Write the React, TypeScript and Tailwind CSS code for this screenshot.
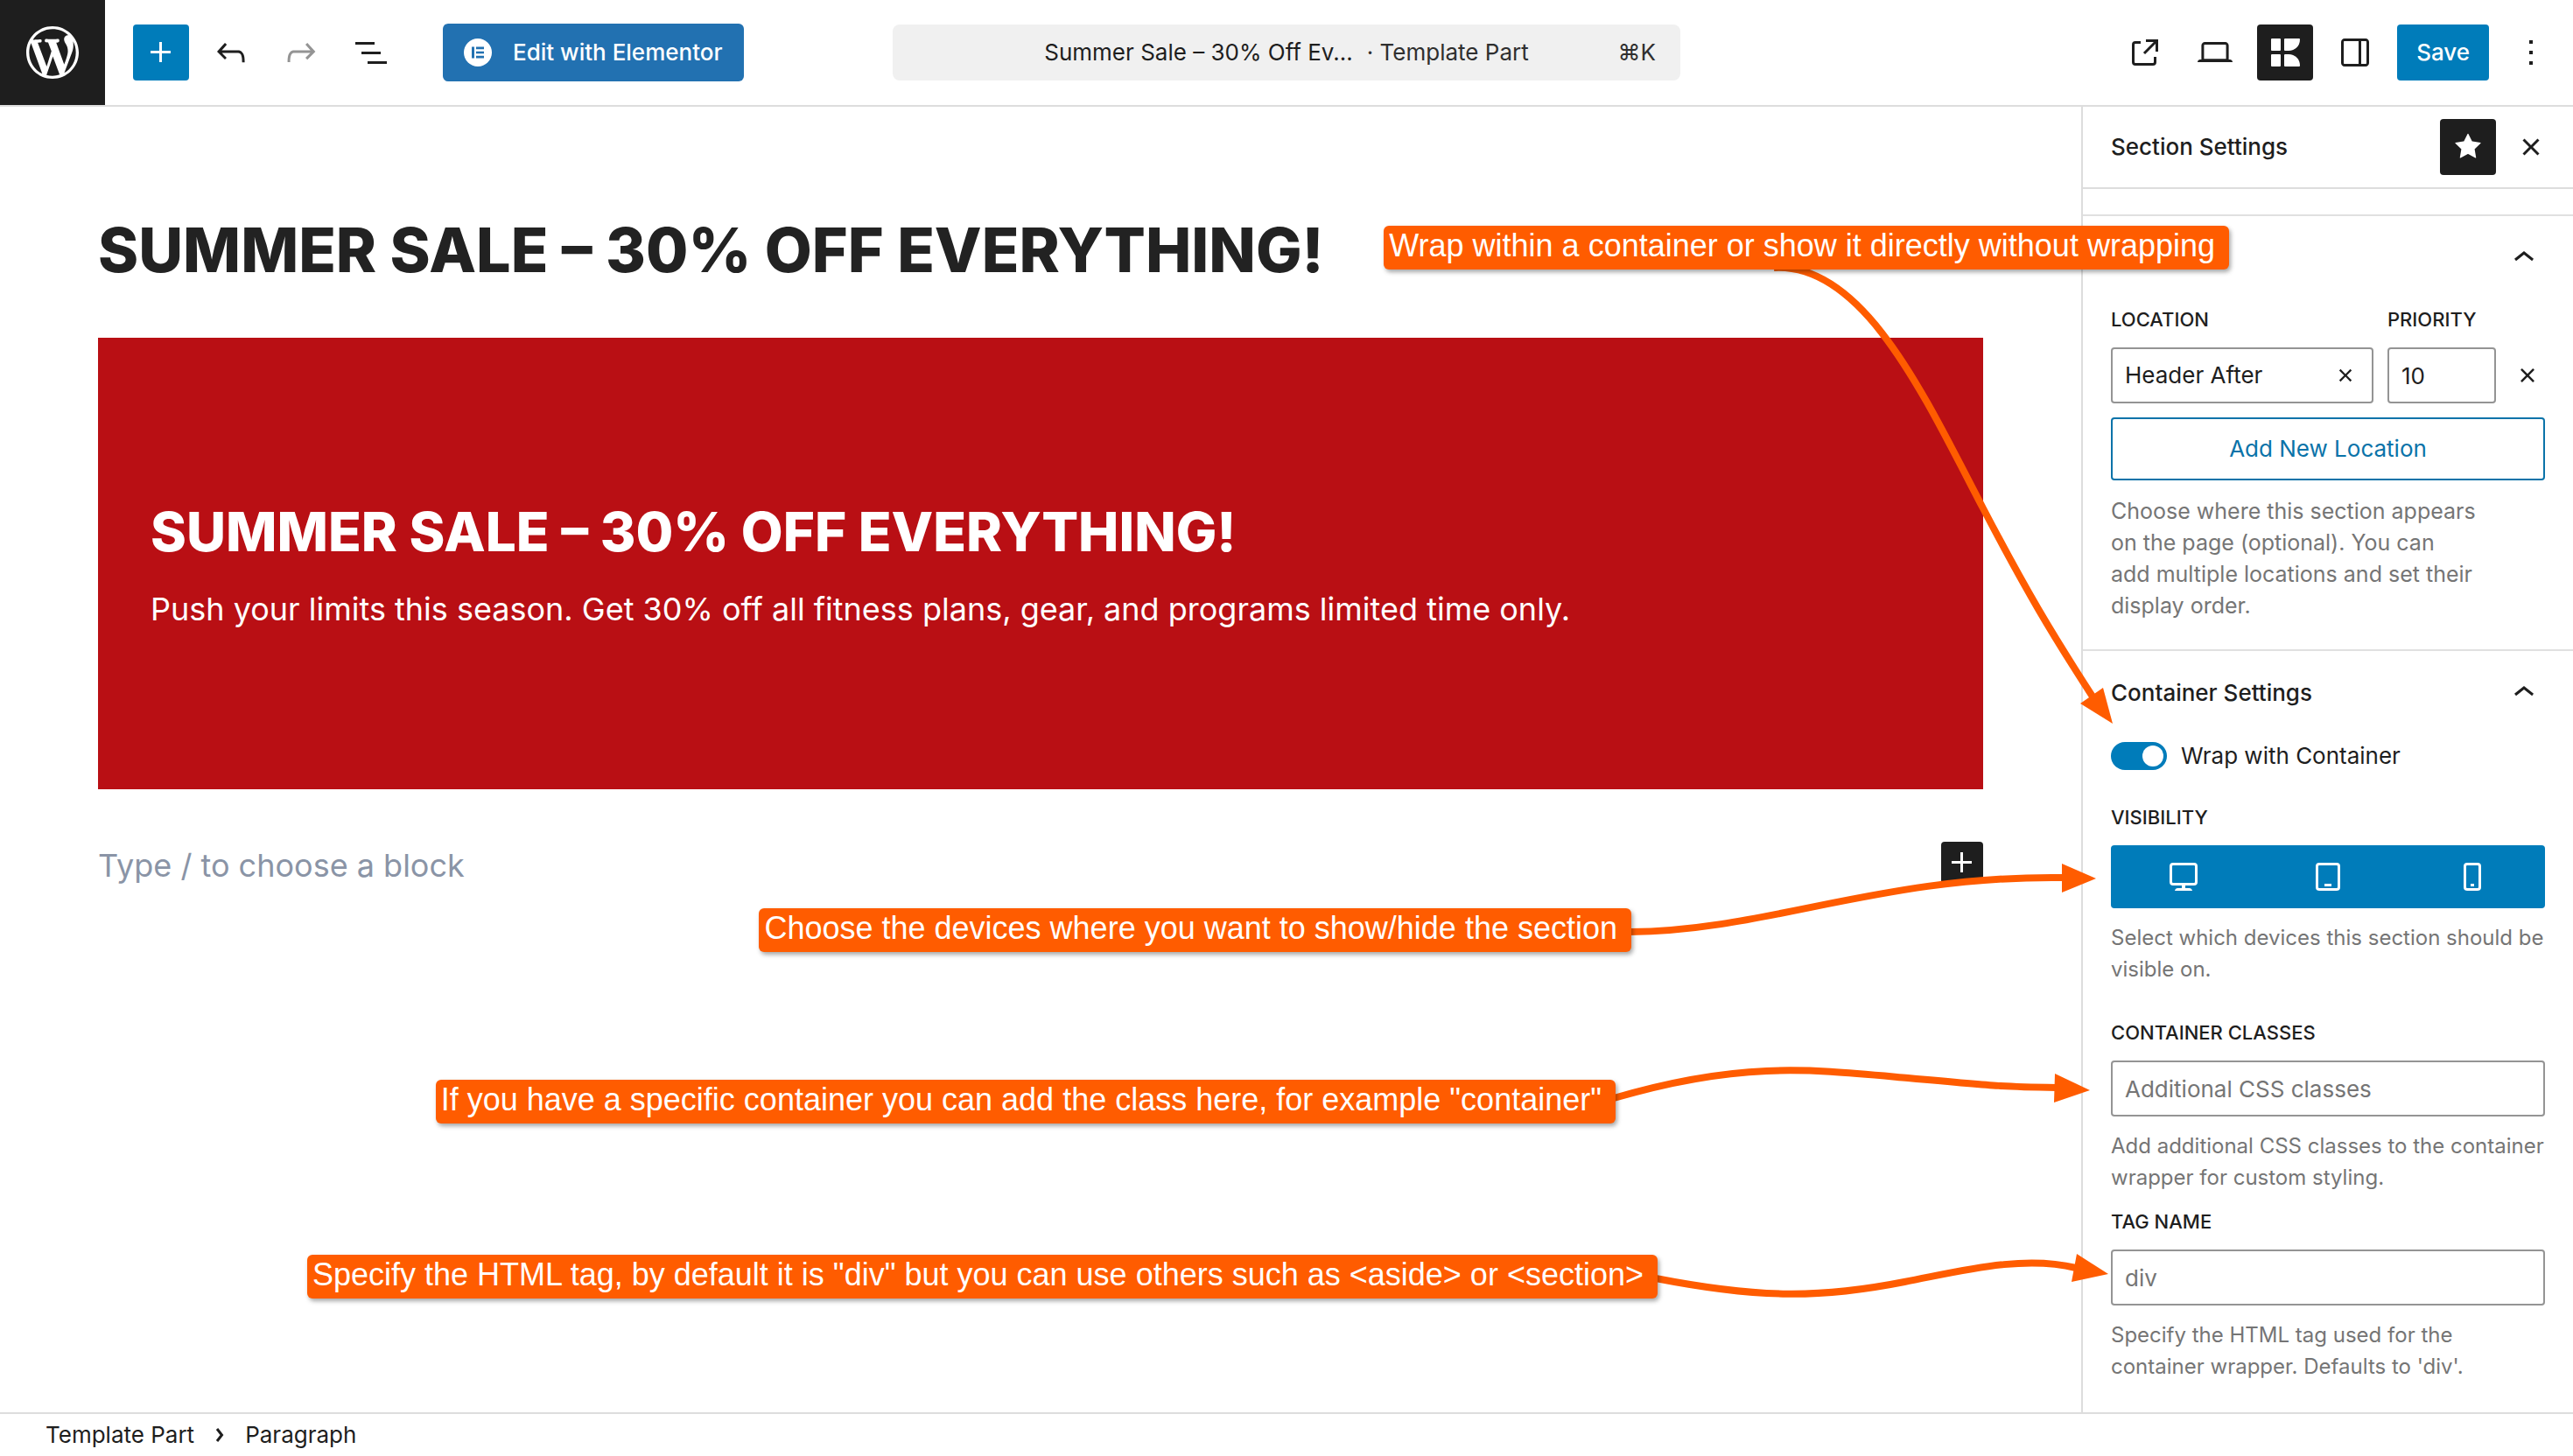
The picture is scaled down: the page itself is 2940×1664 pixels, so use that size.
import type { ReactNode } from "react";

const ICONS = {
  plus: "M11 12.5V17.5H12.5V12.5H17.5V11H12.5V6H11V11H6V12.5H11Z",
  undo: "M18.3 11.7c-.6-.6-1.4-.9-2.3-.9H6.7l2.9-3.3-1.1-1-4.5 5L8.5 16l1-1-2.7-2.7H16c.5 0 .9.2 1.3.5 1 1 1 3.4 1 4.5v.3h1.5v-.2c0-1.5 0-4.3-1.5-5.7z",
  redo: "M15.6 6.5l-1.1 1 2.9 3.3H8c-.9 0-1.7.3-2.3.9-1.4 1.5-1.4 4.2-1.4 5.6v.2h1.5v-.3c0-1.1 0-3.5 1-4.5.3-.3.7-.5 1.3-.5h9.2L14.5 15l1.1 1.1 4.6-4.6-4.6-5z",
  list: "M3 6h11v1.5H3V6Zm3.5 5.5h11V13h-11v-1.5ZM21 17H10v1.5h11V17Z",
  external:
    "M19.5 4.5h-7V6h4.44l-5.97 5.97 1.06 1.06L18 7.06v4.44h1.5v-7Zm-13 1a2 2 0 0 0-2 2v10a2 2 0 0 0 2 2h10a2 2 0 0 0 2-2v-3H17v3a.5.5 0 0 1-.5.5h-10a.5.5 0 0 1-.5-.5v-10a.5.5 0 0 1 .5-.5h3V5.5h-3Z",
  laptop:
    "M20.5 16h-.7V8c0-1.1-.9-2-2-2H6.2c-1.1 0-2 .9-2 2v8h-.7c-.8 0-1.5.7-1.5 1.5h20c0-.8-.7-1.5-1.5-1.5zM5.7 8c0-.3.2-.5.5-.5h11.6c.3 0 .5.2.5.5v7.6H5.7V8z",
  drawer:
    "M18 4H6c-1.1 0-2 .9-2 2v12c0 1.1.9 2 2 2h12c1.1 0 2-.9 2-2V6c0-1.1-.9-2-2-2zm-4 14.5H6c-.3 0-.5-.2-.5-.5V6c0-.3.2-.5.5-.5h8v13zm4.5-.5c0 .3-.2.5-.5.5h-2.5v-13H18c.3 0 .5.2.5.5v12z",
  more: "M13 19h-2v-2h2v2zm0-6h-2v-2h2v2zm0-6h-2V5h2v2z",
  close:
    "M12 13.06l3.712 3.713 1.061-1.06L13.061 12l3.712-3.712-1.06-1.06L12 10.938 8.288 7.227l-1.061 1.06L10.939 12l-3.712 3.712 1.06 1.061L12 13.061z",
  chevronUp: "M6.5 12.4L12 8l5.5 4.4-.9 1.2L12 10l-4.5 3.6-1-1.2z",
  star: "M11.776 4.454a.25.25 0 01.448 0l2.069 4.192a.25.25 0 00.188.137l4.626.672a.25.25 0 01.139.426l-3.348 3.263a.25.25 0 00-.072.222l.79 4.607a.25.25 0 01-.362.263l-4.138-2.175a.25.25 0 00-.232 0l-4.138 2.175a.25.25 0 01-.363-.263l.79-4.607a.25.25 0 00-.071-.222L4.754 9.881a.25.25 0 01.139-.426l4.626-.672a.25.25 0 00.188-.137l2.069-4.192z",
  wordpress:
    "M20 10c0-5.51-4.49-10-10-10C4.48 0 0 4.49 0 10c0 5.52 4.48 10 10 10 5.51 0 10-4.48 10-10zM7.78 15.37L4.37 6.22c.55-.02 1.17-.08 1.17-.08.5-.06.44-1.13-.06-1.11 0 0-1.45.11-2.37.11-.18 0-.37 0-.58-.01C4.12 2.69 6.87 1.11 10 1.11c2.33 0 4.45.87 6.05 2.34-.68-.11-1.65.39-1.65 1.58 0 .74.45 1.36.9 2.1.35.61.55 1.36.55 2.46 0 1.49-1.4 5-1.4 5l-3.03-8.37c.54-.02.82-.17.82-.17.5-.05.44-1.25-.06-1.22 0 0-1.44.12-2.38.12-.87 0-2.33-.12-2.33-.12-.5-.03-.56 1.2-.06 1.22l.92.08 1.26 3.41zM17.41 10c.24-.64.74-1.87.43-4.25.7 1.29 1.05 2.71 1.05 4.25 0 3.29-1.73 6.24-4.4 7.78.97-2.59 1.94-5.2 2.92-7.78zM6.1 18.09C3.12 16.65 1.11 13.53 1.11 10c0-1.3.23-2.48.72-3.59C3.25 10.3 4.67 14.2 6.1 18.09zm4.03-6.63l2.58 6.98c-.86.29-1.76.45-2.71.45-.79 0-1.57-.11-2.29-.33.81-2.38 1.62-4.74 2.42-7.1z",
};

function Icon({ d, className = "size-12" }: { d: string; className?: string }) {
  return (
    <svg viewBox="0 0 24 24" fill="currentColor" aria-hidden="true" className={className}>
      <path d={d} />
    </svg>
  );
}

function IconButton({ label, className = "", children }: { label: string; className?: string; children: ReactNode }) {
  return (
    <button
      type="button"
      aria-label={label}
      className={"flex size-16 shrink-0 items-center justify-center rounded-sm " + className}
    >
      {children}
    </button>
  );
}

function TopBar() {
  return (
    <header className="grid h-[122px] grid-cols-[1fr_900px_1fr] items-center border-b-2 border-[#dddddd]">
      <div className="flex items-center">
        <a href="#" aria-label="View site" className="flex size-[120px] items-center justify-center bg-[#1e1e1e] text-white">
          <svg viewBox="-2 -2 24 24" fill="currentColor" aria-hidden="true" className="size-[72px]">
            <path d={ICONS.wordpress} />
          </svg>
        </a>
        <div className="ml-8 flex items-center gap-4">
          <IconButton label="Block inserter" className="bg-[#007cba] text-white">
            <Icon d={ICONS.plus} />
          </IconButton>
          <IconButton label="Undo">
            <Icon d={ICONS.undo} />
          </IconButton>
          <IconButton label="Redo" className="text-[#949494]">
            <Icon d={ICONS.redo} />
          </IconButton>
          <IconButton label="Document overview">
            <Icon d={ICONS.list} />
          </IconButton>
        </div>
        <button
          type="button"
          className="ml-[50px] flex h-[66px] items-center gap-6 rounded-md bg-[#2271b1] px-6 font-medium whitespace-nowrap text-white"
        >
          <svg viewBox="0 0 32 32" aria-hidden="true" className="size-8">
            <circle cx="16" cy="16" r="16" fill="#fff" />
            <path fill="#2271b1" d="M9 9.500h3v13H9zM14 9.500h9v2.700h-9zM14 14.650h9v2.700h-9zM14 19.800h9v2.700h-9z" />
          </svg>
          Edit with Elementor
        </button>
      </div>

      <button type="button" className="flex h-16 items-center rounded-lg bg-[#f0f0f0] px-7">
        <span className="flex-1" />
        <span className="flex gap-4 whitespace-nowrap">
          <span>Summer Sale – 30% Off Ev...</span>
          <span className="text-[#2f2f2f]">· Template Part</span>
        </span>
        <span className="flex-1 text-right text-[#2f2f2f]">⌘K</span>
      </button>

      <div className="flex items-center justify-end gap-4 pr-4">
        <IconButton label="View">
          <Icon d={ICONS.external} />
        </IconButton>
        <IconButton label="Preview">
          <Icon d={ICONS.laptop} />
        </IconButton>
        <IconButton label="Section settings" className="bg-[#1e1e1e] text-white">
          <svg viewBox="0 0 33 32" fill="currentColor" aria-hidden="true" className="h-8 w-[33px]">
            <rect width="11" height="14" rx="1" />
            <rect y="18" width="11" height="14" rx="1" />
            <path d="M16 0H32a1 1 0 0 1 1 1C33 8.500 27.500 14 20 14H16a1 1 0 0 1-1-1V1a1 1 0 0 1 1-1Z" />
            <path d="M16 18H20C27.500 18 33 23.500 33 31a1 1 0 0 1-1 1H16a1 1 0 0 1-1-1V19a1 1 0 0 1 1-1Z" />
          </svg>
        </IconButton>
        <IconButton label="Settings">
          <Icon d={ICONS.drawer} />
        </IconButton>
        <button type="button" className="h-16 rounded-sm bg-[#007cba] px-[22px] font-medium text-white">
          Save
        </button>
        <IconButton label="Options">
          <Icon d={ICONS.more} />
        </IconButton>
      </div>
    </header>
  );
}

function Canvas() {
  return (
    <main className="min-w-0 flex-1 px-28 pt-[124px]">
      <h1 className="text-[70px] leading-[80px] font-extrabold text-[#222222]">SUMMER SALE – 30% OFF EVERYTHING!</h1>
      <section className="mt-[60px] bg-[#b90f14] px-[60px] py-[182px] text-white">
        <h2 className="text-[62px] leading-[80px] font-extrabold">SUMMER SALE – 30% OFF EVERYTHING!</h2>
        <p className="mt-6 text-4xl leading-[48px]">
          Push your limits this season. Get 30% off all fitness plans, gear, and programs limited time only.
        </p>
      </section>
      <div className="mt-[60px] flex items-start justify-between">
        <p className="text-4xl leading-[54px] text-[#8a94a6]">Type / to choose a block</p>
        <button
          type="button"
          aria-label="Add block"
          className="flex size-12 items-center justify-center rounded-sm bg-[#1e1e1e] text-white"
        >
          <Icon d={ICONS.plus} />
        </button>
      </div>
    </main>
  );
}

const LABEL = "block text-[22px] leading-7 font-medium uppercase";
const FIELD = "h-16 w-full rounded-sm border-2 border-[#949494] bg-white px-[14px] placeholder:text-[#757575]";
const HELP = "mt-4 text-2xl leading-9 text-[#757575]";

function PanelToggle({ title, hidden = false }: { title: string; hidden?: boolean }) {
  return (
    <button
      type="button"
      aria-expanded="true"
      aria-label={title}
      className="flex h-24 w-full items-center justify-between text-left font-medium"
    >
      <span>{hidden ? "" : title}</span>
      <Icon d={ICONS.chevronUp} />
    </button>
  );
}

function DeviceButton({ label, children }: { label: string; children: ReactNode }) {
  return (
    <button type="button" aria-label={label} aria-pressed="true" className="flex h-full items-center justify-center">
      <svg viewBox="0 0 32 32" aria-hidden="true" className="size-8" fill="none" stroke="currentColor" strokeWidth="3">
        {children}
      </svg>
    </button>
  );
}

function Sidebar() {
  return (
    <aside className="w-[562px] shrink-0 border-l-2 border-[#dddddd]">
      <div className="flex h-[94px] items-center gap-2 border-b-2 border-[#dddddd] pr-4 pl-8">
        <h2 className="flex-1 font-medium">Section Settings</h2>
        <IconButton label="Pin to toolbar" className="bg-[#1e1e1e] text-white">
          <Icon d={ICONS.star} />
        </IconButton>
        <IconButton label="Close settings">
          <Icon d={ICONS.close} />
        </IconButton>
      </div>

      <section className="mt-[29px] border-t-2 border-[#e0e0e0] px-8 pb-8">
        <PanelToggle title="Location" hidden />
        <div className="mt-2 flex items-end gap-4">
          <div className="flex-1">
            <label htmlFor="location" className={LABEL}>
              Location
            </label>
            <div className="mt-[18px] flex h-16 items-center rounded-sm border-2 border-[#949494] pr-[6px]">
              <input id="location" defaultValue="Header After" className="w-0 flex-1 pl-[14px] outline-none" />
              <button type="button" aria-label="Clear location" className="flex size-12 items-center justify-center">
                <Icon d={ICONS.close} className="size-9" />
              </button>
            </div>
          </div>
          <div className="w-[124px]">
            <label htmlFor="priority" className={LABEL}>
              Priority
            </label>
            <input id="priority" defaultValue="10" className={FIELD + " mt-[18px]"} />
          </div>
          <button type="button" aria-label="Remove location" className="flex h-16 w-10 items-center justify-center">
            <Icon d={ICONS.close} className="size-10" />
          </button>
        </div>
        <button type="button" className="mt-4 h-[72px] w-full rounded-sm border-2 border-[#0a73a9] text-[#0a73a9]">
          Add New Location
        </button>
        <p className="mt-[17px] w-[418px] text-[25px] leading-9 text-[#757575]">
          Choose where this section appears on the page (optional). You can add multiple locations and set their display
          order.
        </p>
      </section>

      <section className="border-t-2 border-[#e0e0e0] px-8">
        <PanelToggle title="Container Settings" />
        <label className="mt-2 flex h-8 items-center gap-4">
          <input
            type="checkbox"
            defaultChecked
            className="h-8 w-16 appearance-none rounded-full bg-[#949494] p-1 before:block before:size-6 before:rounded-full before:bg-white checked:bg-[#007cba] checked:before:ml-auto"
          />
          Wrap with Container
        </label>

        <div role="group" aria-labelledby="visibility-label">
          <span id="visibility-label" className={LABEL + " mt-10"}>
            Visibility
          </span>
          <div className="mt-[18px] grid h-[72px] grid-cols-3 rounded-sm bg-[#007cba] text-white">
            <DeviceButton label="Desktop">
              <rect x="1.500" y="1.500" width="29" height="23" rx="2.500" />
              <path d="M6 32c.5-2 1.500-3 3.500-3H14v-3h4v3h4.500c2 0 3 1 3.500 3Z" fill="currentColor" stroke="none" />
            </DeviceButton>
            <DeviceButton label="Tablet">
              <rect x="3.500" y="1.500" width="25" height="29" rx="2.500" />
              <path d="M12 25.500h8" />
            </DeviceButton>
            <DeviceButton label="Mobile">
              <rect x="7.500" y="1.500" width="17" height="29" rx="2.500" />
              <path d="M14 25.500h4" />
            </DeviceButton>
          </div>
          <p className={HELP}>Select which devices this section should be visible on.</p>
        </div>

        <label htmlFor="container-classes" className={LABEL + " mt-10"}>
          Container Classes
        </label>
        <input id="container-classes" placeholder="Additional CSS classes" className={FIELD + " mt-[18px]"} />
        <p className={HELP}>Add additional CSS classes to the container wrapper for custom styling.</p>

        <label htmlFor="tag-name" className={LABEL + " mt-[18px]"}>
          Tag Name
        </label>
        <input id="tag-name" placeholder="div" className={FIELD + " mt-[18px]"} />
        <p className={HELP + " pr-6"}>Specify the HTML tag used for the container wrapper. Defaults to 'div'.</p>
      </section>
    </aside>
  );
}

function Callout({ className, children }: { className: string; children: ReactNode }) {
  return (
    <p
      className={
        "absolute rounded-md bg-[#ff5c00] pr-4 pb-1 pl-1.5 font-['Liberation_Sans',sans-serif] text-4xl leading-[46px] whitespace-nowrap text-white shadow-[2px_3px_5px_rgba(0,0,0,0.35)] " +
        className
      }
    >
      {children}
    </p>
  );
}

function Annotations() {
  return (
    <>
      <svg
        viewBox="1840 0 1100 1664"
        aria-hidden="true"
        className="pointer-events-none absolute top-0 right-0 h-[1664px] w-[1100px]"
        fill="none"
        stroke="#ff5c00"
        strokeWidth="8"
      >
        <path d="M2027 306C2130 300 2200 455 2266 581C2315 675 2345 725 2391 796" />
        <path d="M1862 1065C2020 1064 2150 1000 2358 1003" />
        <path d="M1844 1255C1990 1212 2070 1222 2180 1232S2290 1242 2350 1243" />
        <path d="M1892 1461C2010 1484 2080 1484 2176 1465C2240 1453 2310 1434 2372 1449" />
        <g fill="#ff5c00" stroke="none">
          <path d="M2414 827L2377 804L2403 786Z" />
          <path d="M2395 1004L2356 987V1020Z" />
          <path d="M2388 1246L2348 1227L2347 1260Z" />
          <path d="M2409 1456L2373 1433L2367 1465Z" />
        </g>
      </svg>
      <Callout className="top-[258px] right-[393px]">Wrap within a container or show it directly without wrapping</Callout>
      <Callout className="top-[1038px] right-[1076px]">Choose the devices where you want to show/hide the section</Callout>
      <Callout className="top-[1234px] right-[1094px]">
        If you have a specific container you can add the class here, for example "container"
      </Callout>
      <Callout className="top-[1434px] right-[1046px]">
        Specify the HTML tag, by default it is "div" but you can use others such as &lt;aside&gt; or &lt;section&gt;
      </Callout>
    </>
  );
}

export default function App() {
  return (
    <div className="relative flex min-h-screen flex-col bg-white font-['Inter',sans-serif] text-[26px] leading-9 text-[#1e1e1e]">
      <TopBar />
      <div className="flex flex-1">
        <Canvas />
        <Sidebar />
      </div>
      <footer className="flex h-[50px] items-center border-t-2 border-[#dddddd] px-[52px]">
        <nav aria-label="Block breadcrumb">
          <ol className="flex items-center gap-6">
            <li>Template Part</li>
            <li aria-hidden="true">
              <svg viewBox="0 0 10 16" fill="none" stroke="currentColor" strokeWidth="3" className="h-4 w-[10px]">
                <path d="M2 1l5.500 7L2 15" />
              </svg>
            </li>
            <li>Paragraph</li>
          </ol>
        </nav>
      </footer>
      <Annotations />
    </div>
  );
}
